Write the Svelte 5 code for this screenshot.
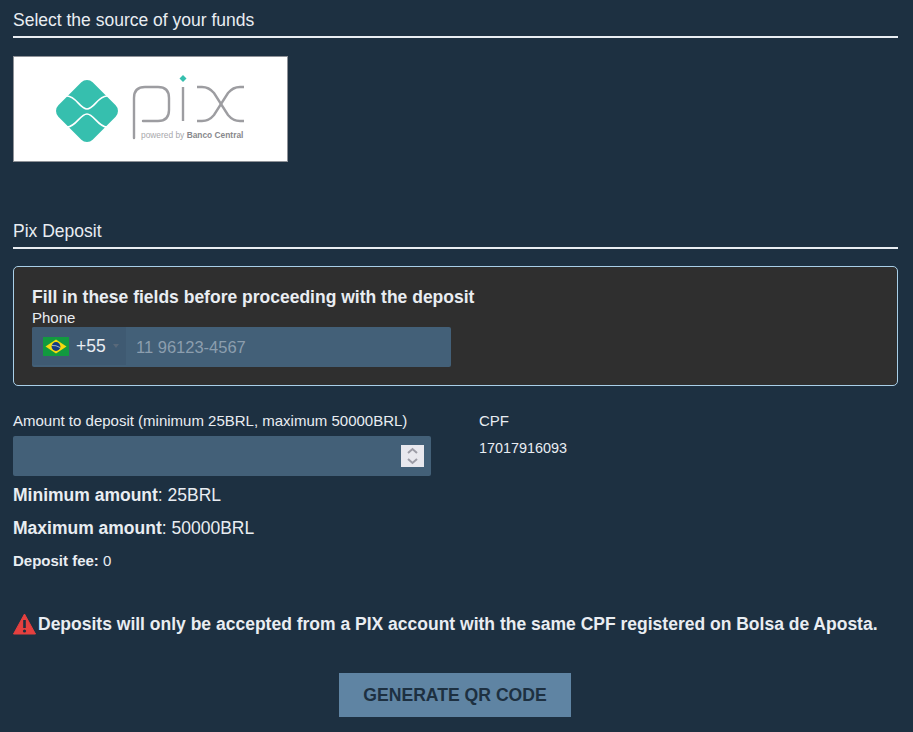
<script>
	let amount = $state('');
	const cpf = '17017916093';
</script>

<style>
	:global(body) {
		margin: 0;
		background: #1d3041;
	}

	.page {
		height: 732px;
		box-sizing: border-box;
		padding: 0 15px 0 13px;
		overflow: hidden;
		font-family: "Liberation Sans", Arial, sans-serif;
		color: #e9edf2;
		font-size: 15px;
	}

	h2 {
		margin: 0;
		font-size: 17.5px;
		font-weight: 400;
		line-height: 18px;
		padding-bottom: 7px;
		border-bottom: 2px solid #e9edf2;
	}

	.first {
		padding-top: 11px;
	}

	.source {
		display: block;
		width: 275px;
		height: 106px;
		box-sizing: border-box;
		margin: 18px 0 60px;
		background: #fff;
		border: 1px solid #8f9298;
	}

	.source svg {
		display: block;
	}

	.notice {
		margin-top: 17px;
		height: 120px;
		box-sizing: border-box;
		padding: 21px 18px 0;
		background: #2f2f2f;
		border: 1px solid #a9cfe8;
		border-radius: 5px;
	}

	.notice h3 {
		margin: 0;
		font-size: 17.5px;
		line-height: 18px;
		font-weight: 700;
	}

	label {
		display: block;
		margin-top: 3px;
		line-height: 18px;
	}

	.phone {
		display: flex;
		align-items: center;
		width: 419px;
		height: 40px;
		background: #436078;
		border-radius: 2px;
	}

	.dial {
		display: flex;
		align-items: center;
		width: 94px;
		height: 38px;
		box-sizing: border-box;
		padding-left: 11px;
		margin-bottom: 2px;
		background: #3f5a72;
		border-radius: 2px 0 0 2px;
		font-size: 17.5px;
	}

	.flag {
		margin-right: 7px;
	}

	.caret {
		width: 0;
		height: 0;
		margin-left: 7px;
		border: 3px solid transparent;
		border-top: 4px solid #59697a;
		border-bottom: 0;
	}

	.placeholder {
		margin-left: 10px;
		color: #8c9eae;
		font-size: 16.5px;
	}

	.fields {
		display: flex;
		margin-top: 27px;
	}

	.left {
		width: 418px;
	}

	.right {
		margin-left: 48px;
	}

	.amount-label {
		line-height: 16px;
		padding-bottom: 7px;
	}

	.amount {
		position: relative;
		height: 40px;
		background: #436078;
		border-radius: 2px;
	}

	.amount input {
		width: 100%;
		height: 100%;
		box-sizing: border-box;
		padding: 0 40px 0 10px;
		border: 0;
		background: transparent;
		color: #e9edf2;
		font: inherit;
		outline: none;
		appearance: textfield;
	}

	.spin {
		position: absolute;
		top: 9px;
		right: 7px;
		width: 23px;
		height: 22px;
		background: #e8e8ee;
	}

	.limit {
		margin: 0;
		font-size: 17.5px;
		line-height: 18px;
	}

	.limit.min {
		margin-top: 10px;
	}

	.limit.max {
		margin-top: 15px;
	}

	.fee {
		margin: 16px 0 0;
		line-height: 16px;
	}

	.cpf-label {
		line-height: 16px;
	}

	.cpf-value {
		margin-top: 11px;
		font-size: 14.4px;
		line-height: 16px;
	}

	.warning {
		display: flex;
		align-items: center;
		gap: 2px;
		margin-top: 43px;
		font-size: 17.5px;
		font-weight: 700;
		line-height: 24px;
	}

	.actions {
		display: flex;
		justify-content: center;
		margin-top: 37px;
		padding-right: 1px;
	}

	button {
		width: 232px;
		height: 44px;
		border: 0;
		background: #5f84a3;
		color: #1d3041;
		font: 700 17.6px "Liberation Sans", Arial, sans-serif;
	}
</style>

<div class="page">
	<h2 class="first">Select the source of your funds</h2>

	<div class="source">
		<svg width="273" height="104" viewBox="0 0 273 104">
			<!-- pix mark: rounded diamond cut by two white waves -->
			<rect x="48.75" y="29.75" width="48.5" height="48.5" rx="8" fill="#36bfae" transform="rotate(45 73 54)" />
			<g fill="none" stroke="#fff" stroke-width="1.6">
				<path d="M36 39 H53 C62 39 66 52 73 52 C80 52 84 39 93 39 H110" />
				<path d="M36 70 H53 C62 70 66 57 73 57 C80 57 84 70 93 70 H110" />
			</g>
			<path d="M169 18 L172.5 21.5 L169 25 L165.5 21.5 Z" fill="#36bfae" />
			<!-- p, i, x strokes -->
			<g fill="none" stroke="#9d9da1" stroke-width="2.4">
				<path d="M120 81 V41 Q120 30 131 30 H144 Q155 30 155 41 V53 Q155 64 144 64 H129" stroke-linecap="round" />
				<path d="M169 30 V64" />
				<path d="M183 30 H188 Q195 30 200 36 L214 58 Q219 64 226 64 H230" />
				<path d="M183 64 H188 Q195 64 200 58 L214 36 Q219 30 226 30 H230" />
			</g>
			<text x="127" y="81" font-family="'Liberation Sans', Arial, sans-serif" font-size="8.4" fill="#a8a8ac">powered by <tspan font-weight="700" fill="#88888c">Banco Central</tspan></text>
		</svg>
	</div>

	<h2>Pix Deposit</h2>

	<div class="notice">
		<h3>Fill in these fields before proceeding with the deposit</h3>
		<label for="phone">Phone</label>
		<div class="phone" id="phone">
			<div class="dial">
				<svg class="flag" width="26" height="19" viewBox="0 0 26 19">
					<rect width="26" height="19" fill="#129a3f" />
					<path d="M13 2.5 L23.5 9.5 L13 16.5 L2.5 9.5 Z" fill="#f5d90f" />
					<circle cx="13" cy="9.5" r="4.4" fill="#143a82" />
					<path d="M9 8.5 Q13 8 17 10.5" fill="none" stroke="#dfe7e0" stroke-width="0.7" />
				</svg>
				+55
				<span class="caret"></span>
			</div>
			<span class="placeholder">11 96123-4567</span>
		</div>
	</div>

	<div class="fields">
		<div class="left">
			<div class="amount-label">Amount to deposit (minimum 25BRL, maximum 50000BRL)</div>
			<div class="amount">
				<input type="text" bind:value={amount} />
				<div class="spin">
					<svg width="23" height="22" viewBox="0 0 23 22">
						<path d="M7 8 L11.5 4 L16 8 M7 14 L11.5 18 L16 14" fill="none" stroke="#9c9ca6" stroke-width="2" />
					</svg>
				</div>
			</div>
			<p class="limit min"><b>Minimum amount</b>: 25BRL</p>
			<p class="limit max"><b>Maximum amount</b>: 50000BRL</p>
			<p class="fee"><b>Deposit fee:</b> 0</p>
		</div>
		<div class="right">
			<div class="cpf-label">CPF</div>
			<div class="cpf-value">{cpf}</div>
		</div>
	</div>

	<div class="warning">
		<svg width="23" height="22" viewBox="0 0 23 22">
			<path d="M11.5 1 L22.5 21 L0.5 21 Z" fill="#e5403f" stroke="#e5403f" stroke-linejoin="round" />
			<rect x="10.2" y="7" width="2.6" height="8" fill="#1d3041" />
			<circle cx="11.5" cy="18" r="1.6" fill="#1d3041" />
		</svg>
		<span>Deposits will only be accepted from a PIX account with the same CPF registered on Bolsa de Aposta.</span>
	</div>

	<div class="actions">
		<button type="button">GENERATE QR CODE</button>
	</div>
</div>
